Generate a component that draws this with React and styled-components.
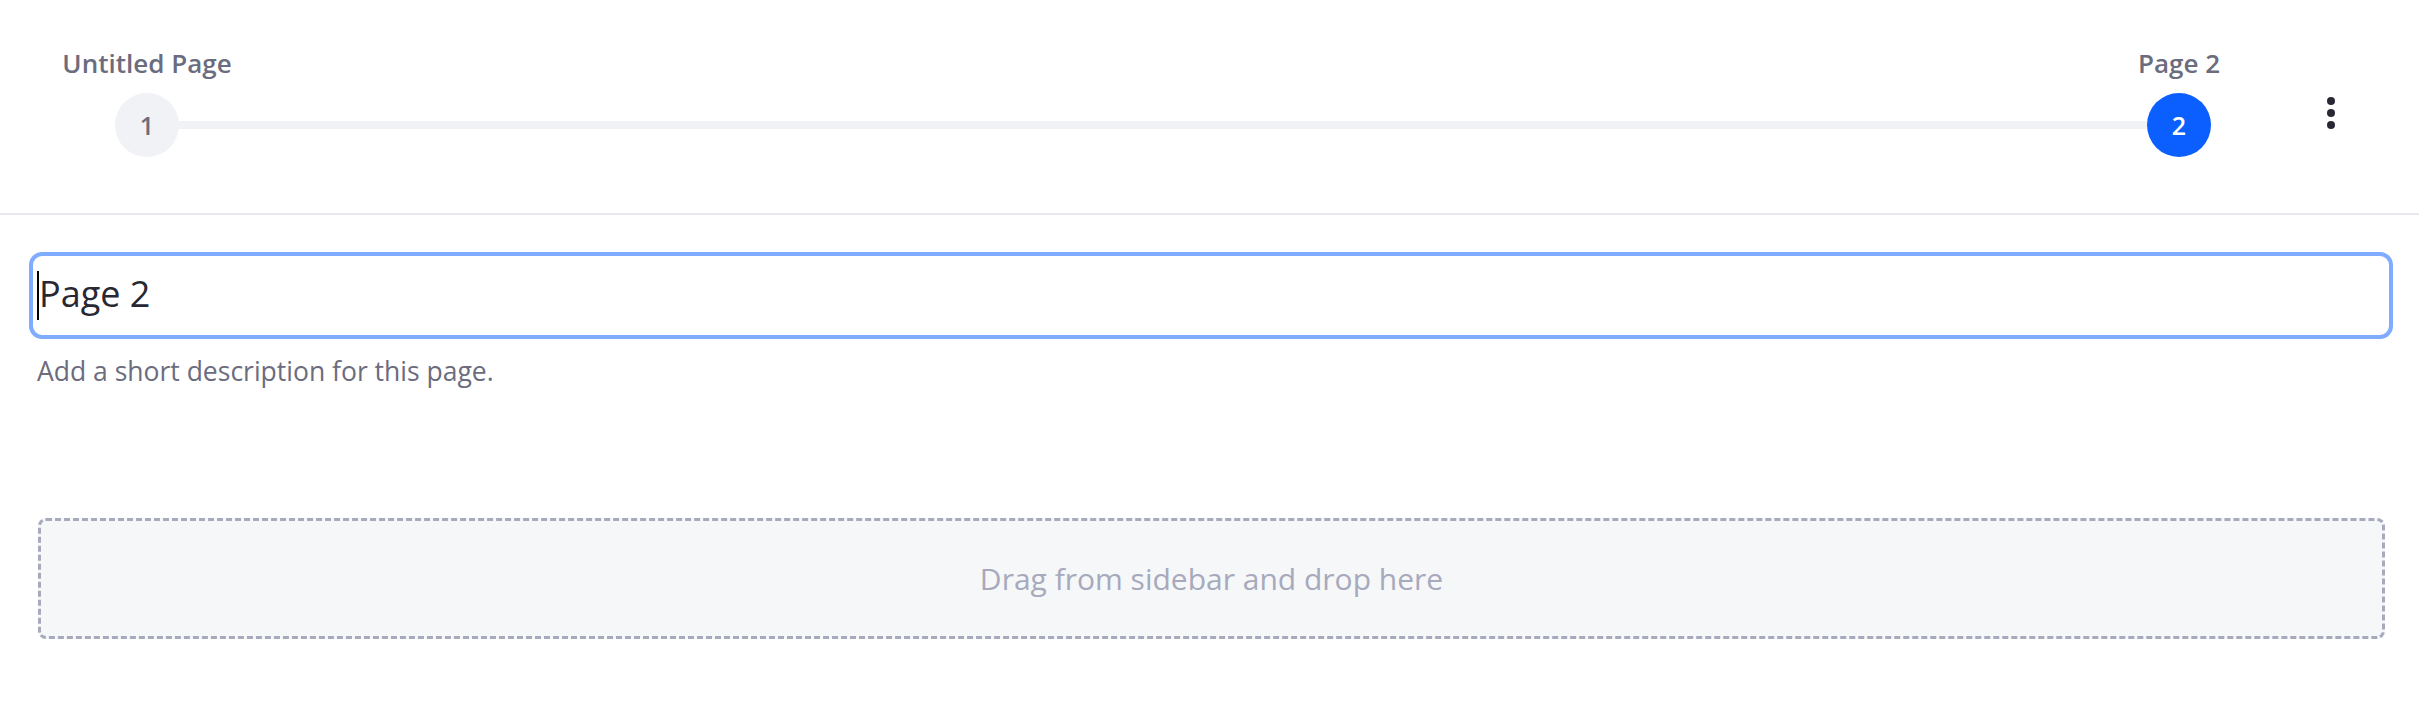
import styled, { createGlobalStyle } from "styled-components";

const GlobalStyle = createGlobalStyle`
  body {
    margin: 0;
    background: #ffffff;
    font-family: "Open Sans", "Noto Sans", sans-serif;
  }
`;

const Header = styled.header`
  display: flex;
  align-items: flex-start;
  height: 213px;
  padding: 0 64px 0 115px;
  border-bottom: 2px solid #e7e7ed;
  box-sizing: content-box;
`;

const Stepper = styled.ol`
  display: flex;
  align-items: flex-end;
  flex: 1;
  margin: 0;
  padding: 45px 0 0 0;
  list-style: none;
`;

const Step = styled.li`
  display: flex;
  flex-direction: column;
  align-items: center;
  width: 64px;
`;

const StepLabel = styled.span`
  white-space: nowrap;
  font-size: 26px;
  font-weight: 600;
  line-height: 36px;
  color: #6b6c7e;
  margin-bottom: 12px;
`;

const StepCircle = styled.span`
  display: flex;
  align-items: center;
  justify-content: center;
  width: 64px;
  height: 64px;
  border-radius: 50%;
  font-size: 25px;
  font-weight: 600;
  background: ${({ $active }) => ($active ? "#0b5fff" : "#f1f2f5")};
  color: ${({ $active }) => ($active ? "#ffffff" : "#6b6c7e")};
`;

const Connector = styled.li`
  flex: 1;
  height: 8px;
  margin-bottom: 28px;
  background: #f1f2f5;
`;

const KebabButton = styled.button`
  display: flex;
  flex-direction: column;
  align-items: center;
  gap: 4px;
  width: 48px;
  margin: 97px 0 0 96px;
  padding: 0;
  border: 0;
  background: transparent;
  cursor: pointer;
`;

const Dot = styled.span`
  width: 8px;
  height: 8px;
  border-radius: 50%;
  background: #272833;
`;

const Body = styled.main`
  display: flex;
  flex-direction: column;
  padding: 37px 26px 0 29px;
`;

const TitleField = styled.div`
  display: flex;
  align-items: center;
  height: 79px;
  padding: 0 4px 5px 4px;
  box-sizing: border-box;
  height: 87px;
  border: 4px solid #80acff;
  border-radius: 13px;
  font-size: 36px;
  color: #272833;
`;

const Caret = styled.span`
  width: 2px;
  height: 49px;
  margin-top: 5px;
  background: #000000;
`;

const Description = styled.p`
  margin: 14px 0 0 8px;
  font-size: 26.5px;
  line-height: 36px;
  color: #6b6c7e;
`;

const DropZone = styled.div`
  display: flex;
  align-items: center;
  justify-content: center;
  height: 115px;
  margin: 129px 8px 0 9px;
  border: 3px dashed #a7a9bc;
  border-radius: 8px;
  background: #f6f7f9;
  font-size: 30px;
  color: #a7a9bc;
`;

export default function App() {
  return (
    <>
      <GlobalStyle />
      <Header>
        <Stepper>
          <Step>
            <StepLabel>Untitled Page</StepLabel>
            <StepCircle>1</StepCircle>
          </Step>
          <Connector />
          <Step>
            <StepLabel>Page 2</StepLabel>
            <StepCircle $active>2</StepCircle>
          </Step>
        </Stepper>
        <KebabButton aria-label="More actions">
          <Dot />
          <Dot />
          <Dot />
        </KebabButton>
      </Header>
      <Body>
        <TitleField>
          <Caret />
          Page 2
        </TitleField>
        <Description>Add a short description for this page.</Description>
        <DropZone>Drag from sidebar and drop here</DropZone>
      </Body>
    </>
  );
}
